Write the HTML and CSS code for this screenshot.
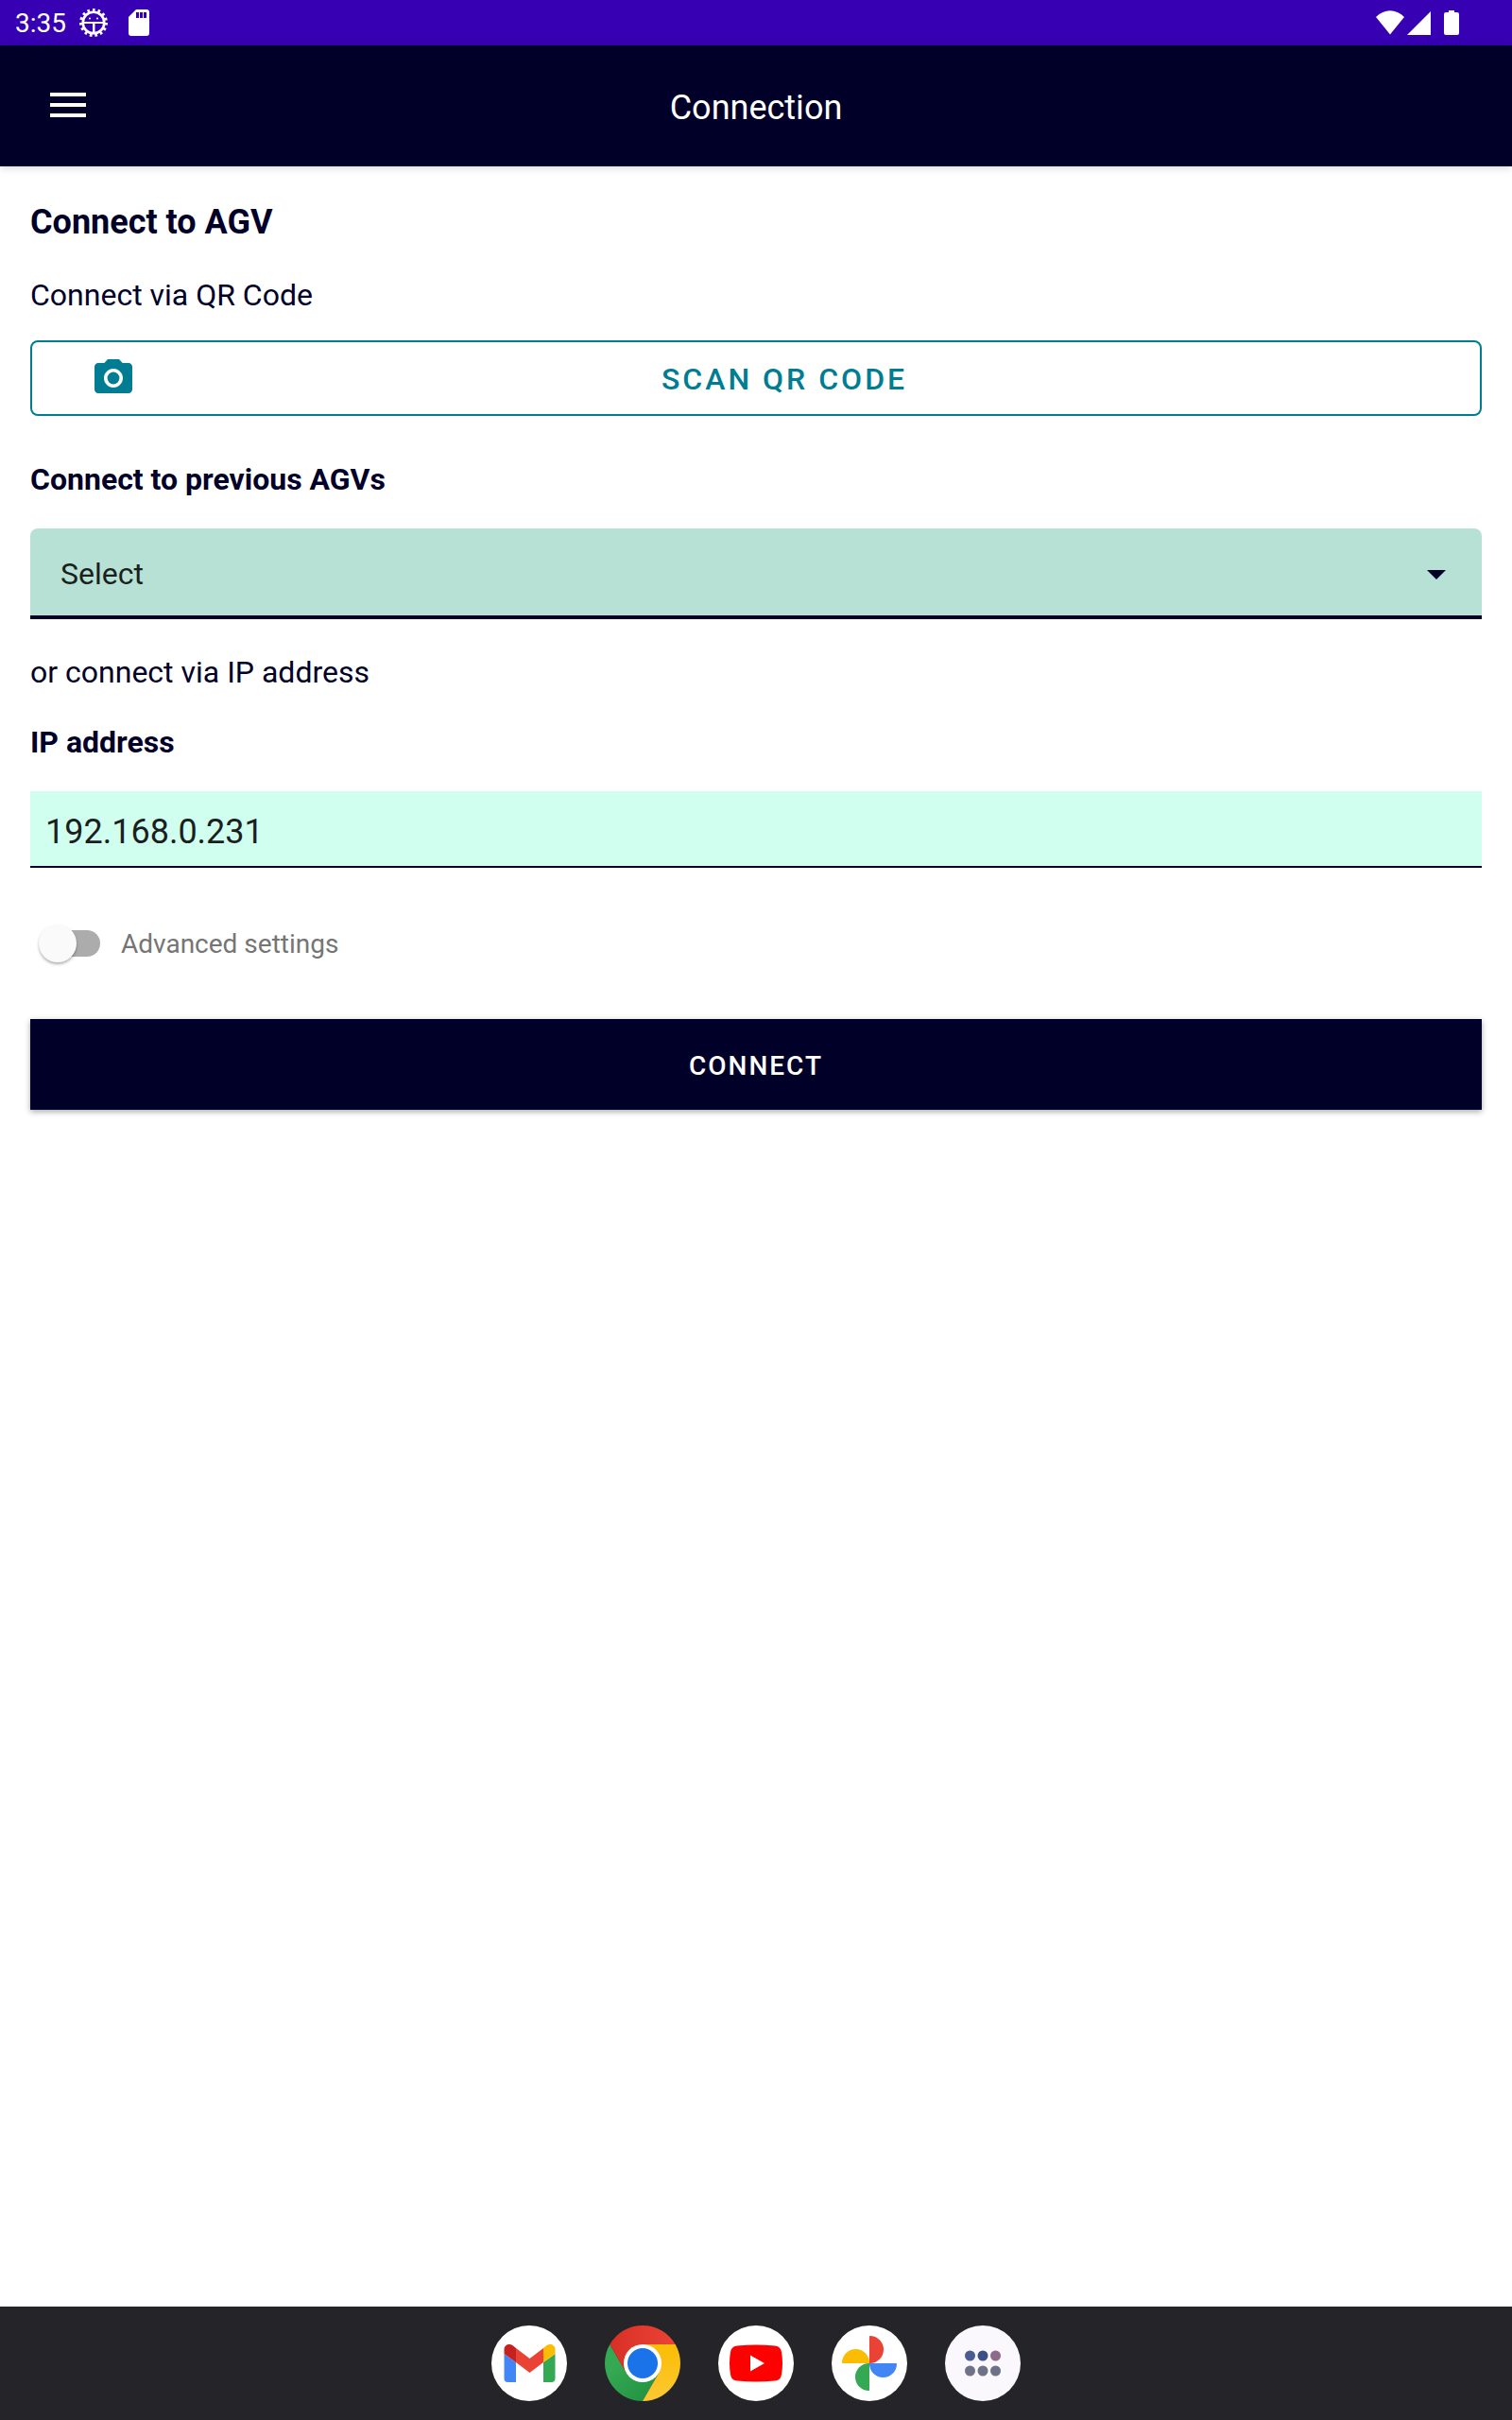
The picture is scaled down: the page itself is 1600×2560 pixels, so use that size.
FILE: index.html
```
<!DOCTYPE html>
<html lang="en">
<head>
    <meta charset="UTF-8">
    <meta name="viewport" content="width=device-width, initial-scale=1.0">
    <title>Connection</title>
    <link rel="stylesheet" href="styles.css">
</head>
<body>
    <div class="status-bar">
        <span class="clock">3:35</span>
        <svg class="debug-icon" width="32" height="32" viewBox="0 0 32 32">
            <circle cx="16" cy="16" r="13.500" fill="none" stroke="#fff" stroke-width="3" stroke-dasharray="2.650 3"/>
            <circle cx="16" cy="16" r="11.300" fill="none" stroke="#fff" stroke-width="2.600"/>
            <path fill="#fff" d="M5 15h22v2H5zM15 16h2.500v11H15z"/>
            <circle cx="12" cy="11.500" r="1" fill="#fff"/>
            <circle cx="20" cy="11.500" r="1" fill="#fff"/>
        </svg>
        <svg class="sd-icon" width="22" height="28" viewBox="0 0 22 28">
            <path fill="#fff" fill-rule="evenodd" d="M8 0h11a3 3 0 0 1 3 3v22a3 3 0 0 1-3 3H3a3 3 0 0 1-3-3V8zM8 3v6h3V3zM12 3v6h3V3zM16 3v6h3V3z"/>
        </svg>
        <div class="signals">
            <svg width="30" height="26" viewBox="0 0 30 26"><path fill="#fff" d="M15 25.500L0 7C9-2 21-2 30 7z"/></svg>
            <svg width="25" height="26" viewBox="0 0 25 26"><path fill="#fff" d="M25 1v25H0z"/></svg>
            <svg class="battery" width="16" height="26" viewBox="0 0 16 26"><path fill="#fff" d="M5 0h6v2h3a2 2 0 0 1 2 2v20a2 2 0 0 1-2 2H2a2 2 0 0 1-2-2V4a2 2 0 0 1 2-2h3z"/></svg>
        </div>
    </div>

    <header class="app-bar">
        <button class="menu-button" type="button" aria-label="Menu">
            <svg width="38" height="26" viewBox="0 0 38 26"><path fill="#fff" d="M0 0h38v4H0zM0 11h38v4H0zM0 22h38v4H0z"/></svg>
        </button>
        <span class="title">Connection</span>
    </header>

    <main>
        <h1>Connect to AGV</h1>
        <p class="via-qr">Connect via QR Code</p>
        <button class="scan-button" type="button">
            <svg width="48" height="48" viewBox="0 0 24 24" fill="currentColor">
                <circle cx="12" cy="12" r="3.200"/>
                <path d="M9 2L7.170 4H4c-1.100 0-2 .9-2 2v12c0 1.100.9 2 2 2h16c1.100 0 2-.9 2-2V6c0-1.100-.9-2-2-2h-3.170L15 2H9zm3 15c-2.760 0-5-2.240-5-5s2.240-5 5-5 5 2.240 5 5-2.240 5-5 5z"/>
            </svg>
            <span>SCAN QR CODE</span>
        </button>

        <label class="field-label previous" for="agv">Connect to previous AGVs</label>
        <div class="select-box">
            <select id="agv">
                <option>Select</option>
            </select>
            <svg width="20" height="10" viewBox="0 0 20 10"><path fill="#000028" d="M0 0h20L10 10z"/></svg>
        </div>

        <p class="via-ip">or connect via IP address</p>
        <label class="field-label ip" for="ip">IP address</label>
        <input class="ip-input" id="ip" type="text" value="192.168.0.231">

        <div class="advanced">
            <input class="switch" id="advanced" type="checkbox" role="switch">
            <label for="advanced">Advanced settings</label>
        </div>

        <button class="connect-button" type="button">CONNECT</button>
    </main>

    <nav class="dock">
        <a href="#" aria-label="Gmail">
            <svg viewBox="0 0 80 80">
                <circle cx="40" cy="40" r="40" fill="#fff"/>
                <path fill="#4285f4" d="M13.500 30L26 39v21h-8.500a4 4 0 0 1-4-4z"/>
                <path fill="#34a853" d="M67.500 30L55 39v21h8.500a4 4 0 0 0 4-4z"/>
                <path fill="#ea4335" d="M26 24l14.500 11L55 24v15L40.500 50 26 39z"/>
                <path fill="#c5221f" d="M13.500 25.500c0-5.500 6-7 9.500-4L26 24v15l-12.500-9z"/>
                <path fill="#fbbc04" d="M67.500 25.500c0-5.500-6-7-9.500-4L55 24v15l12.500-9z"/>
            </svg>
        </a>
        <a href="#" aria-label="Chrome">
            <svg viewBox="0 0 80 80">
                <defs>
                    <linearGradient id="red"><stop offset="0" stop-color="#d93025"/><stop offset="1" stop-color="#ea4335"/></linearGradient>
                    <linearGradient id="green" x1="0" y1="0" x2="1" y2="1"><stop offset=".3" stop-color="#34a853"/><stop offset="1" stop-color="#1e8e3e"/></linearGradient>
                    <linearGradient id="yellow" x1="0" y1="1" x2="0" y2="0"><stop offset="0" stop-color="#fcc934"/><stop offset="1" stop-color="#fbbc04"/></linearGradient>
                </defs>
                <path fill="url(#green)" d="M5.360 20A40 40 0 0 0 40 80L57.320 50 40 40 22.680 50z"/>
                <path fill="url(#yellow)" d="M40 80A40 40 0 0 0 74.640 20H40v20l17.320 10z"/>
                <path fill="url(#red)" d="M74.640 20A40 40 0 0 0 5.360 20L22.680 50 40 40V20z"/>
                <circle cx="40" cy="40" r="20" fill="#fff"/>
                <circle cx="40" cy="40" r="16" fill="#1a73e8"/>
            </svg>
        </a>
        <a href="#" aria-label="YouTube">
            <svg viewBox="0 0 80 80">
                <circle cx="40" cy="40" r="40" fill="#fff"/>
                <path fill="#f00" d="M20 21.500Q40 19.500 60 21.500 66 22 67 28 69 40 67 52 66 58 60 58.500 40 60.500 20 58.500 14 58 13 52 11 40 13 28 14 22 20 21.500z"/>
                <path fill="#fff" d="M34 31.500L49 40 34 48.500z"/>
            </svg>
        </a>
        <a href="#" aria-label="Photos">
            <svg viewBox="0 0 80 80">
                <circle cx="40" cy="40" r="40" fill="#fff"/>
                <path fill="#ea4335" d="M40 11.500q0-.5.5-.5a14.500 14.500 0 0 1 0 29H40z"/>
                <path fill="#4285f4" d="M68.500 40q.5 0 .5.500a14.500 14.500 0 0 1-29 0V40z"/>
                <path fill="#34a853" d="M40 68.500q0 .5-.5.500a14.500 14.500 0 0 1 0-29h.5z"/>
                <path fill="#fbbc04" d="M11.500 40q-.5 0-.5-.5a14.500 14.500 0 0 1 29 0v.5z"/>
            </svg>
        </a>
        <a href="#" aria-label="All apps">
            <svg viewBox="0 0 80 80">
                <circle cx="40" cy="40" r="40" fill="#faf8fd"/>
                <circle cx="26.500" cy="32" r="5.500" fill="#4a5c92"/>
                <circle cx="40" cy="32" r="5.500" fill="#3c4f86"/>
                <circle cx="53.500" cy="32" r="5.500" fill="#8c6a88"/>
                <circle cx="26.500" cy="48" r="5.500" fill="#6d7287"/>
                <circle cx="40" cy="48" r="5.500" fill="#6d7287"/>
                <circle cx="53.500" cy="48" r="5.500" fill="#6d7287"/>
            </svg>
        </a>
    </nav>
</body>
</html>
```
FILE: styles.css
```
* {
    box-sizing: border-box;
}

body {
    display: flex;
    flex-direction: column;
    min-height: 100vh;
    margin: 0;
    font-family: Roboto, sans-serif;
    font-size: 32px;
    line-height: 38px;
    color: #000028;
    background-color: #fff;
}

svg {
    display: block;
    flex: none;
}

button, input, select {
    margin: 0;
    font-family: inherit;
}

.status-bar {
    display: flex;
    align-items: center;
    height: 48px;
    padding: 0 56px 0 16px;
    color: #fff;
    background-color: #3700b3;
}

.clock {
    padding-top: 2px;
    font-size: 28px;
    line-height: 34px;
}

.debug-icon {
    margin-left: 13px;
}

.sd-icon {
    margin-left: 21px;
}

.signals {
    display: flex;
    gap: 3px;
    margin-left: auto;
}

.battery {
    margin-left: 11px;
}

.app-bar {
    display: grid;
    grid-template-columns: 1fr auto 1fr;
    align-items: center;
    height: 128px;
    padding: 0 32px;
    color: #fff;
    background-color: #000028;
    box-shadow: 0 2px 8px rgba(0, 0, 0, 0.15);
}

.menu-button {
    justify-self: start;
    padding: 20px 21px 22px;
    border: none;
    background: none;
    cursor: pointer;
}

.title {
    padding-top: 3px;
    font-size: 36px;
    line-height: 42px;
}

main {
    display: flex;
    flex-direction: column;
    flex: 1;
    padding: 38px 32px;
}

h1 {
    margin: 0;
    font-size: 36px;
    line-height: 42px;
}

p {
    margin: 37px 0 0;
}

.scan-button {
    display: flex;
    align-items: center;
    height: 80px;
    margin-top: 29px;
    padding: 0 62px;
    border: 2px solid #007c93;
    border-radius: 8px;
    font-size: 32px;
    font-weight: 500;
    letter-spacing: 3px;
    color: #007c93;
    background-color: #fff;
    cursor: pointer;
}

.scan-button span {
    flex: 1;
    padding: 1px 0 0 12px;
}

.field-label {
    font-weight: bold;
}

.previous {
    margin-top: 48px;
}

.ip {
    margin-top: 36px;
}

.select-box {
    position: relative;
    margin-top: 33px;
}

.select-box select {
    display: block;
    width: 100%;
    height: 96px;
    padding: 4px 32px 0;
    border: none;
    border-bottom: 4px solid #000028;
    border-radius: 8px 8px 0 0;
    font-size: 32px;
    color: #1b1f1e;
    background-color: #b6e1d4;
    appearance: none;
}

/* arrow drawn over the select */
.select-box svg {
    position: absolute;
    top: 44px;
    right: 38px;
    pointer-events: none;
}

.ip-input {
    height: 81px;
    margin-top: 33px;
    padding: 6px 16px 0;
    border: none;
    border-bottom: 2px solid #000028;
    border-radius: 0;
    font-size: 36px;
    color: #1b1f1e;
    background-color: #d0fff0;
}

.advanced {
    display: flex;
    align-items: center;
    gap: 22px;
    margin: 60px 0;
    padding-left: 9px;
    font-size: 28px;
    line-height: 34px;
    color: #757575;
}

.advanced label {
    padding-top: 2px;
}

.switch {
    position: relative;
    width: 65px;
    height: 40px;
    appearance: none;
    cursor: pointer;
}

.switch::before {
    content: "";
    position: absolute;
    inset: 6px 0 6px 8px;
    border-radius: 14px;
    background-color: #acacac;
}

.switch::after {
    content: "";
    position: absolute;
    top: 0;
    left: 0;
    width: 40px;
    height: 40px;
    border-radius: 50%;
    background-color: #fafafa;
    box-shadow: 0 2px 3px rgba(0, 0, 0, 0.3);
}

.switch:checked::after {
    left: 25px;
}

.connect-button {
    height: 96px;
    padding: 2px 32px 0;
    border: none;
    font-size: 28px;
    font-weight: 500;
    letter-spacing: 2px;
    color: #fff;
    background-color: #000028;
    box-shadow: 0 2px 6px rgba(0, 0, 0, 0.35);
    cursor: pointer;
}

.dock {
    display: flex;
    justify-content: center;
    align-items: center;
    gap: 40px;
    height: 120px;
    background-color: #252429;
}

.dock svg {
    width: 80px;
    height: 80px;
}
```
